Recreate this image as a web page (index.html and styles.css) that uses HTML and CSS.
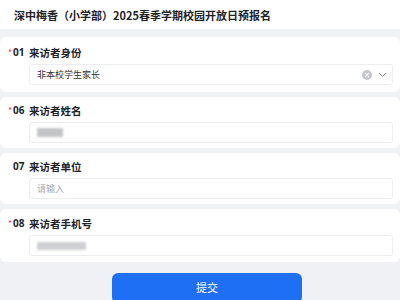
FILE: index.html
```html
<!DOCTYPE html>
<html lang="zh">
<head>
<meta charset="utf-8">
<link rel="stylesheet" href="styles.css">
</head>
<body>
<div class="page">
  <header class="title">深中梅香（小学部）2025春季学期校园开放日预报名</header>
  <section class="card first">
    <div class="label"><span class="req">*</span><span class="num">01</span><span class="text">来访者身份</span></div>
    <div class="input select">
      <span class="value">非本校学生家长</span>
      <span class="icons">
        <svg class="clear" width="10" height="10" viewBox="0 0 10 10"><circle cx="5" cy="5" r="5" fill="#c4c6cc"/><path d="M3.3 3.3 L6.7 6.7 M6.7 3.3 L3.3 6.7" stroke="#fff" stroke-width="1.1" stroke-linecap="round"/></svg>
        <svg class="chev" width="9" height="6" viewBox="0 0 9 6"><path d="M1.5 1.5 L4.5 4.5 L7.5 1.5" fill="none" stroke="#8a8d94" stroke-width="1" stroke-linecap="round" stroke-linejoin="round"/></svg>
      </span>
    </div>
  </section>
  <section class="card">
    <div class="label"><span class="req">*</span><span class="num">06</span><span class="text">来访者姓名</span></div>
    <div class="input"><span class="blur name"></span></div>
  </section>
  <section class="card">
    <div class="label"><span class="req none">*</span><span class="num">07</span><span class="text">来访者单位</span></div>
    <div class="input"><span class="placeholder">请输入</span></div>
  </section>
  <section class="card">
    <div class="label"><span class="req">*</span><span class="num">08</span><span class="text">来访者手机号</span></div>
    <div class="input"><span class="blur phone"></span></div>
  </section>
  <div class="actions"><button class="submit">提交</button></div>
</div>
</body>
</html>
```
FILE: styles.css
```css
* { box-sizing: border-box; }
html, body { margin: 0; padding: 0; }
body {
  width: 400px;
  height: 300px;
  overflow: hidden;
  background: #f0f1f4;
  font-family: "Noto Sans CJK SC", "Noto Sans", sans-serif;
  color: #1f2329;
}
.page {
  display: flex;
  flex-direction: column;
  gap: 5px;
}
.title {
  background: #fff;
  height: 29px;
  padding: 0 14px;
  font-size: 11px;
  font-weight: 700;
  line-height: 30px;
  margin-bottom: 3px;
  white-space: nowrap;
}
.card {
  background: #fff;
  border-radius: 6px;
  padding: 6px 7px 5px 8px;
}
.card.first { padding-top: 8px; padding-bottom: 7px; }
.card:last-of-type { padding-top: 7px; padding-bottom: 6px; }
.label {
  display: flex;
  align-items: center;
  height: 14px;
  font-size: 10.5px;
  font-weight: 700;
  margin-bottom: 5px;
}
.req {
  color: #f54a45;
  width: 5px;
  font-size: 9px;
  font-weight: 400;
}
.req.none { visibility: hidden; }
.num {
  font-family: "Noto Sans", sans-serif;
  font-size: 10px;
  width: 16px;
}
.input {
  margin-left: 21px;
  height: 21px;
  border: 1px solid #ebedf0;
  border-radius: 3px;
  display: flex;
  align-items: center;
  padding: 0 7px;
  font-size: 9px;
  color: #333;
}
.select { justify-content: space-between; padding-right: 5px; }
.icons { display: flex; align-items: center; gap: 6px; }
.placeholder { color: #a8abb2; }
.blur {
  display: block;
  height: 9px;
  background: #c4c5c8;
  filter: blur(1.2px);
  border-radius: 1px;
}
.blur.name { width: 26px; }
.blur.phone { width: 49px; height: 8px; background: #cfd0d3; }
.actions {
  display: flex;
  justify-content: center;
  padding-top: 6px;
  padding-left: 14px;
}
.submit {
  width: 190px;
  height: 30px;
  border: none;
  border-radius: 6px;
  background: #1f6ff5;
  color: #fff;
  font-family: "Noto Sans CJK SC", sans-serif;
  font-size: 11px;
  padding: 0;
  padding-bottom: 3px;
}
```
